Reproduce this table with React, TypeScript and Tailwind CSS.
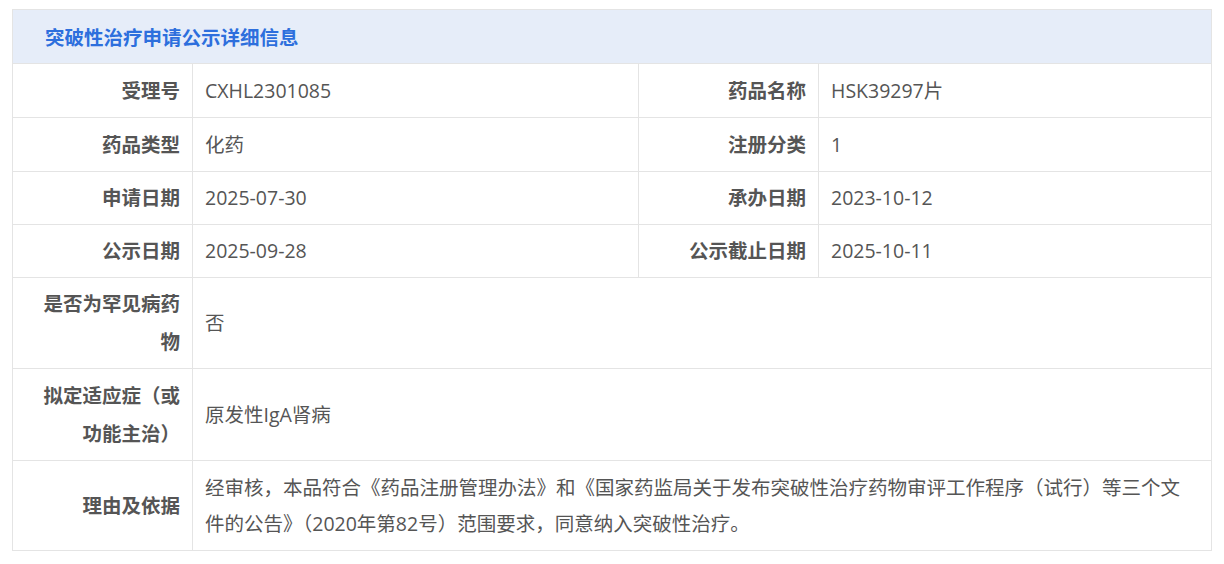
import React from 'react';

const font = { fontFamily: '"Noto Sans CJK SC", "Noto Sans", sans-serif' };
const valueFont = { fontFamily: '"Open Sans", "Noto Sans CJK SC", sans-serif' };

type Pair = [string, string];

const pairRows: [Pair, Pair][] = [
  [['受理号', 'CXHL2301085'], ['药品名称', 'HSK39297片']],
  [['药品类型', '化药'], ['注册分类', '1']],
  [['申请日期', '2025-07-30'], ['承办日期', '2023-10-12']],
  [['公示日期', '2025-09-28'], ['公示截止日期', '2025-10-11']],
];

const wideRows: { label: string; value: string; h: string }[] = [
  { label: '是否为罕见病药物', value: '否', h: 'h-[91px]' },
  { label: '拟定适应症（或功能主治）', value: '原发性IgA肾病', h: 'h-[92px]' },
  {
    label: '理由及依据',
    value: '经审核，本品符合《药品注册管理办法》和《国家药监局关于发布突破性治疗药物审评工作程序（试行）等三个文件的公告》（2020年第82号）范围要求，同意纳入突破性治疗。',
    h: 'h-[90px]',
  },
];

function Label({ children }: { children: React.ReactNode }) {
  return <td className="border border-[#e4e4e4] pl-4 pr-3 pb-[2px] text-right align-middle text-[19.5px] font-bold leading-[38px] text-[#555]">{children}</td>;
}

function Value({ children, span }: { children: React.ReactNode; span?: number }) {
  return (
    <td colSpan={span} className="border border-[#e4e4e4] pl-3 pr-[13px] align-middle text-[19.5px] leading-[36px] text-[#555]" style={valueFont}>
      {children}
    </td>
  );
}

export default function App() {
  return (
    <div className="min-h-[564px] bg-white px-3 pt-[9px]" style={font}>
      <div className="w-[1200px]">
        <div className="flex h-[54px] items-center border border-b-0 border-[#e4e4e4] bg-[#e6edf9] pl-[32px]">
          <h2 className="text-[19.5px] font-bold text-[#2d6fdd]">突破性治疗申请公示详细信息</h2>
        </div>
        <table className="w-[1200px] table-fixed border-collapse">
          <colgroup>
            <col className="w-[180px]" />
            <col className="w-[446px]" />
            <col className="w-[180px]" />
            <col />
          </colgroup>
          <tbody>
            {pairRows.map(([a, b], i) => (
              <tr key={a[0]} className={i < 2 ? 'h-[54px]' : 'h-[53px]'}>
                <Label>{a[0]}</Label>
                <Value>{a[1]}</Value>
                <Label>{b[0]}</Label>
                <Value>{b[1]}</Value>
              </tr>
            ))}
            {wideRows.map((r) => (
              <tr key={r.label} className={r.h}>
                <Label>{r.label}</Label>
                <Value span={3}>{r.value}</Value>
              </tr>
            ))}
          </tbody>
        </table>
      </div>
    </div>
  );
}
